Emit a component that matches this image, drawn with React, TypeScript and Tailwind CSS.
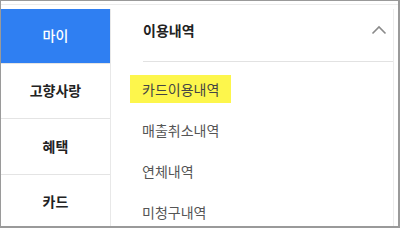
const FONT = { fontFamily: '"Noto Sans CJK KR", "Noto Sans", sans-serif' };

const sideItems = ["마이", "고향사랑", "혜택", "카드"];
const subItems = ["카드이용내역", "매출취소내역", "연체내역", "미청구내역"];

function ChevronUp() {
  return (
    <svg width="16" height="10" viewBox="0 0 16 10" fill="none">
      <path d="M1.5 8.5 L8 2 L14.5 8.5" stroke="#8a8a8a" strokeWidth="1.6" />
    </svg>
  );
}

export default function App() {
  return (
    <div
      className="w-[400px] h-[228px] overflow-hidden bg-white border-l border-t border-r-2 border-b-2 border-[#9a9a9a]"
      style={FONT}
    >
      <div className="mt-[3px] h-full border-t border-[#ececec] pt-[4px] flex">
        {/* left nav */}
        <div className="w-[110px] shrink-0 flex flex-col border-r border-[#e8e8e8]">
          {sideItems.map((label, i) => (
            <div
              key={label}
              className={
                i === 0
                  ? "h-[54px] flex items-center justify-center bg-[#2f7ff2] text-white text-[14px] font-medium"
                  : "h-[56px] flex items-center justify-center border-t border-[#e4e4e4] text-[#222] text-[14px] font-bold"
              }
            >
              {label}
            </div>
          ))}
        </div>

        {/* right panel */}
        <div className="flex-1 border-r border-[#ececec] mr-[4px]">
          <div className="ml-[32px] h-[53px] pb-[10px] flex items-center justify-between border-b border-[#e2e2e2] pr-[6px]">
            <span className="text-[14px] font-bold text-[#222]">이용내역</span>
            <ChevronUp />
          </div>
          <div className="ml-[19px] mt-[13px] flex flex-col gap-[13px]">
            {subItems.map((label, i) => (
              <div
                key={label}
                className={
                  i === 0
                    ? "self-start h-[28px] px-[12px] flex items-center bg-[#fdf64c] text-[14px] text-[#444]"
                    : "self-start h-[28px] px-[12px] flex items-center text-[14px] text-[#555]"
                }
              >
                {label}
              </div>
            ))}
          </div>
        </div>
      </div>
    </div>
  );
}
